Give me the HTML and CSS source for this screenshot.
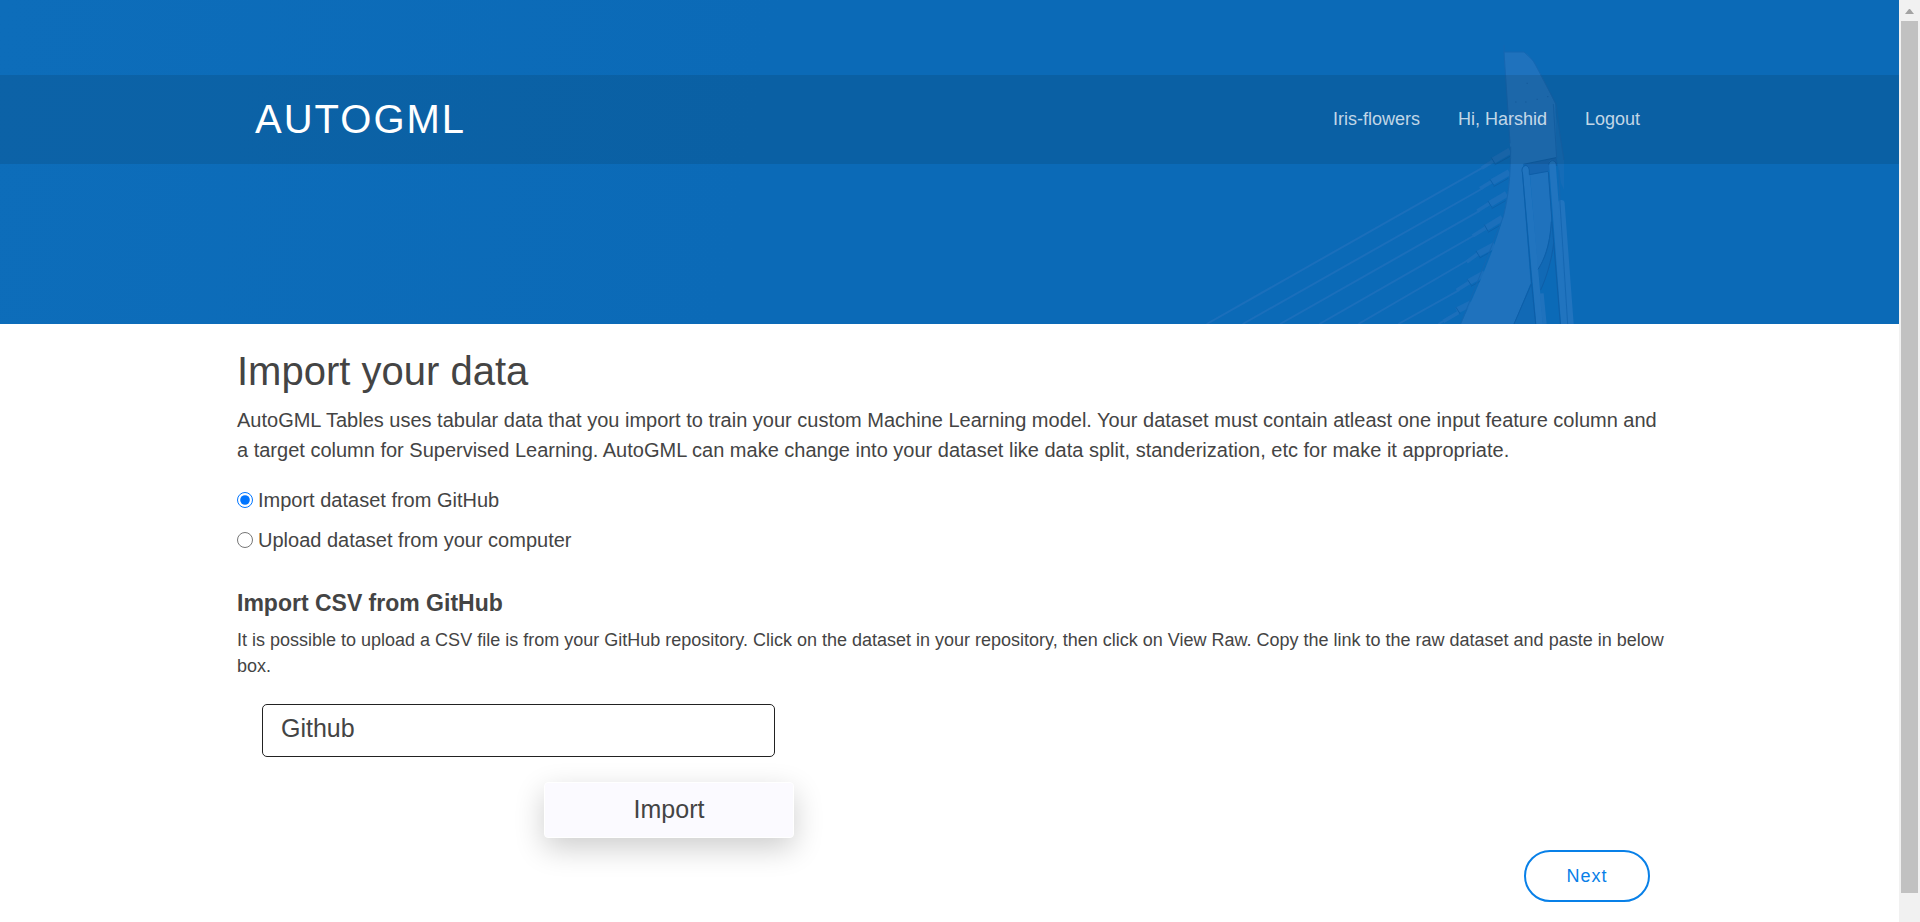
FILE: index.html
```html
<!DOCTYPE html>
<html lang="en">
<head>
<meta charset="utf-8">
<meta name="viewport" content="width=device-width, initial-scale=1">
<title>AutoGML</title>
<link rel="stylesheet" href="styles.css">
</head>
<body>
<div class="window">
  <div class="page">
    <header class="hero">
      <svg class="hero-art" viewBox="0 0 1320 882" aria-hidden="true">
        <g class="cables">
          <path d="M80 882L915 409M188 882L910 474M300 882L900 542M418 882L885 615M535 882L865 690M655 882L835 782M775 882L800 868"/>
        </g>
        <g class="sockets">
          <path d="M938 393L990 362M935 457L988 427M928 523L980 492M916 595L967 564M893 672L944 645M865 757L914 730M830 842L874 820"/>
        </g>
        <g class="sockets-thin">
          <path d="M905 415L945 389M900 476L940 452M892 543L932 518M878 618L920 592M860 696L896 670M830 781L868 757M790 874L835 848"/>
        </g>
        <g class="socket-edges">
          <path d="M934 383l12 20M944 405l46-26M930 448l12 19M941 470l44-25M924 513l12 20M935 536l42-24M913 584l11 20M924 607l38-22M888 663l12 19M899 684l36-20M862 748l12 18M873 769l34-19M828 832l12 19"/>
        </g>
        <path class="tower-side" d="M1120 222L1140 310L1152 390V480L1143 460L1130 385Z"/>
        <path class="tower" d="M972 66H1032C1052 78 1075 110 1126 222L1130 385L1030 405L1027 440L1052 760L1002 882H842C900 760 945 650 970 560C988 480 992 420 990 350C986 250 977 160 972 66Z"/>
        <path class="tower-shade" d="M1030 405L1128 383L1132 405L1104 424L1050 434V420Z"/>
        <path class="gap" d="M1052 762L1002 882H1068Z"/>
        <path class="tower" d="M1050 434L1104 424L1114 560C1110 640 1092 690 1073 720Z"/>
        <path class="gap" d="M1114 575C1110 650 1092 690 1074 720L1082 780C1100 740 1118 690 1121 640Z"/>
        <path class="leg" d="M1038 418L1080 894M1117 400L1154 894"/>
        <path class="leg" d="M1144 520L1172 894"/>
        <path class="leg-thin" d="M1085 790L1094 882"/>
        <path class="line" d="M1026 425C1024 405 1044 398 1048 420M1027 425L1055 760L1067 882M1048 420V434L1104 424M1030 403L1128 383M1105 426L1116 575L1141 882M1106 405C1108 386 1130 388 1130 408M1114 575C1110 650 1092 690 1074 718M1121 640C1115 690 1100 740 1082 780M1054 762L1002 882"/>
        <path class="line-soft" d="M1120 222L1130 385M1137 420L1140 520L1163 882M1128 222L1140 315L1152 390M972 66H1032L1060 92L1128 222M992 350C992 440 985 500 970 560L842 882M972 45V66L990 340"/>
        <path class="dots" d="M1006 216h3M1036 216h3M1070 208h3M1102 200h3M1040 160h3"/>
      </svg>
      <div class="bar">
        <div class="container bar-inner">
          <a class="brand" href="#">AUTOGML</a>
          <nav class="menu">
            <a href="#">Iris-flowers</a>
            <a href="#">Hi, Harshid</a>
            <a href="#">Logout</a>
          </nav>
        </div>
      </div>
    </header>
    <main class="container content">
      <h1 class="title">Import your data</h1>
      <p class="lead">AutoGML Tables uses tabular data that you import to train your custom Machine Learning model. Your dataset must contain atleast one input feature column and a target column for Supervised Learning. AutoGML can make change into your dataset like data split, standerization, etc for make it appropriate.</p>
      <form class="form">
        <div class="choices">
          <label class="choice"><input type="radio" name="source" checked><span>Import dataset from GitHub</span></label>
          <label class="choice"><input type="radio" name="source"><span>Upload dataset from your computer</span></label>
        </div>
        <h2 class="subtitle">Import CSV from GitHub</h2>
        <p class="note">It is possible to upload a CSV file is from your GitHub repository. Click on the dataset in your repository, then click on View Raw. Copy the link to the raw dataset and paste in below box.</p>
        <div class="source">
          <input class="field" type="text" aria-label="Github" value="Github">
          <button class="import" type="button">Import</button>
        </div>
        <div class="actions">
          <button class="next" type="button">Next</button>
        </div>
      </form>
    </main>
  </div>
  <div class="scroll" aria-hidden="true">
    <svg class="scroll-arrow" viewBox="0 0 17 21"><path d="M4 14L8 9H9L13 14Z"/></svg>
    <div class="thumb"></div>
  </div>
</div>
</body>
</html>
```
FILE: styles.css
```css
* { box-sizing: border-box; }

body {
  margin: 0;
  background: #fff;
  color: #444;
  font-family: "Liberation Sans", Arial, sans-serif;
  font-size: 20px;
  line-height: 30px;
}

h1, h2, p { margin: 0; }

.window {
  display: flex;
  height: 100vh;
  overflow: hidden;
}

.page {
  flex: 1;
  min-width: 0;
  overflow: hidden;
}

.container {
  width: 100%;
  max-width: 1425px;
  margin: 0 auto;
}

.hero {
  position: relative;
  padding: 75px 0 160px;
  background: linear-gradient(100deg, #0d6dba 0, #0b6ab7 40%, #0b6ab7 100%);
}

.hero-art {
  position: absolute;
  right: 279px;
  bottom: 0;
  width: 440px;
  height: 294px;
  fill: none;
}

.tower { fill: #1f72bd; }
.tower-side { fill: #146cb8; }
.tower-shade { fill: #1665b0; }
.gap { fill: #1169b5; }
.cables { stroke: #1b6fbb; stroke-width: 6; }
.sockets { stroke: #1b6fbb; stroke-width: 19; }
.sockets-thin { stroke: #1b6fbb; stroke-width: 11; }
.socket-edges { stroke: #0b60aa; stroke-width: 3; }
.leg { stroke: #2174bf; stroke-width: 20; stroke-linecap: round; }
.leg-thin { stroke: #1f72bd; stroke-width: 12; }
.line { stroke: #0e5ea8; stroke-width: 3; }
.line-soft { stroke: #1567b2; stroke-width: 3; }
.dots { stroke: #155fa6; stroke-width: 3; }

.bar {
  position: relative;
  background: rgba(10, 30, 40, 0.13);
}

.bar-inner {
  display: flex;
  align-items: center;
  justify-content: space-between;
  min-height: 89px;
  padding: 0 22px 2px 18px;
}

.brand {
  color: #fff;
  font-size: 40px;
  line-height: 48px;
  letter-spacing: 2px;
  text-decoration: none;
}

.menu {
  display: flex;
  gap: 38px;
}

.menu a {
  color: rgba(255, 255, 255, 0.75);
  font-size: 18px;
  text-decoration: none;
}

.content { padding: 23px 0 28px; }

.title {
  margin-bottom: 10px;
  font-size: 40px;
  font-weight: 400;
  line-height: 48px;
}

.lead { margin-bottom: 20px; }

.choices {
  display: grid;
  gap: 10px;
  justify-items: start;
  margin-bottom: 34px;
}

.choice {
  display: flex;
  align-items: center;
  gap: 5px;
}

.choice input {
  width: 16px;
  height: 16px;
  margin: 0;
  accent-color: #0075ff;
}

.subtitle {
  margin-bottom: 10px;
  font-size: 23px;
  line-height: 28px;
}

.note {
  margin: 0 -8px 25px 0;
  font-size: 18px;
  line-height: 26px;
}

.source {
  display: grid;
  gap: 25px;
  max-width: 557px;
  margin-bottom: 12px;
}

.field {
  width: 513px;
  max-width: 100%;
  height: 53px;
  margin-left: 25px;
  padding: 0 18px 4px;
  border: 1px solid #222;
  border-radius: 5px;
  background: #fff;
  color: #444;
  font: inherit;
  font-size: 25px;
}

.import {
  justify-self: end;
  width: 250px;
  height: 56px;
  padding: 0 0 2px;
  border: 1px solid #fff;
  border-radius: 4px;
  background: #fbfaff;
  box-shadow: 0 10px 30px rgba(0, 0, 0, 0.2);
  color: #444;
  font: inherit;
  font-size: 25px;
}

.actions {
  display: flex;
  justify-content: flex-end;
  padding-right: 12px;
}

.next {
  width: 126px;
  height: 52px;
  border: 2px solid #0880e8;
  border-radius: 26px;
  background: #fff;
  color: #0880e8;
  font: inherit;
  font-size: 18px;
  letter-spacing: 1px;
}

.scroll {
  flex: none;
  width: 21px;
  padding: 0 2px 29px;
  display: flex;
  flex-direction: column;
  background: #f1f1f1;
}

.scroll-arrow {
  flex: none;
  width: 17px;
  height: 21px;
  fill: #a3a3a3;
}

.thumb {
  flex: 1;
  background: #c1c1c1;
}
```
